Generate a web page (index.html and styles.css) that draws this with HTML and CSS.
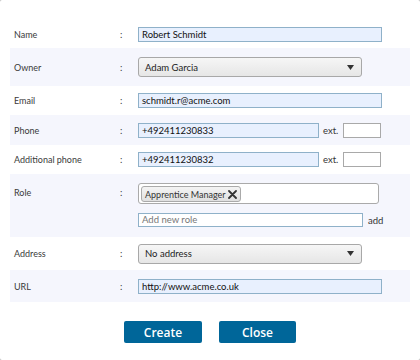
FILE: index.html
```html
<!DOCTYPE html>
<html>
<head>
<meta charset="utf-8">
<link rel="stylesheet" href="styles.css">
</head>
<body>
<div class="dialog">
  <div class="form">
    <div class="row r-name">
      <div class="label">Name</div><div class="colon">:</div>
      <div class="field"><div class="input fill w-full">Robert Schmidt</div></div>
    </div>
    <div class="row alt r-owner">
      <div class="label">Owner</div><div class="colon">:</div>
      <div class="field"><div class="select"><span>Adam Garcia</span><svg class="arrow" width="7" height="5" viewBox="0 0 7 5"><path d="M0 0H7L3.5 5Z" fill="#333"/></svg></div></div>
    </div>
    <div class="row r-email">
      <div class="label">Email</div><div class="colon">:</div>
      <div class="field"><div class="input fill w-full">schmidt.r@acme.com</div></div>
    </div>
    <div class="row alt r-phone">
      <div class="label">Phone</div><div class="colon">:</div>
      <div class="field"><div class="input fill w-phone">+492411230833</div><span class="ext">ext.</span><div class="input blank w-ext"></div></div>
    </div>
    <div class="row r-aphone">
      <div class="label">Additional phone</div><div class="colon">:</div>
      <div class="field"><div class="input fill w-phone">+492411230832</div><span class="ext">ext.</span><div class="input blank w-ext"></div></div>
    </div>
    <div class="row alt r-role top">
      <div class="label">Role</div><div class="colon">:</div>
      <div class="field col">
        <div class="tags"><span class="tag">Apprentice Manager<svg class="x" width="9" height="9" viewBox="0 0 9 9"><path d="M1 1L8 8M8 1L1 8" stroke="#333" stroke-width="1.8" stroke-linecap="round"/></svg></span></div>
        <div class="addline"><div class="input blank w-add placeholder">Add new role</div><span class="add">add</span></div>
      </div>
    </div>
    <div class="row r-address">
      <div class="label">Address</div><div class="colon">:</div>
      <div class="field"><div class="select"><span>No address</span><svg class="arrow" width="7" height="5" viewBox="0 0 7 5"><path d="M0 0H7L3.5 5Z" fill="#333"/></svg></div></div>
    </div>
    <div class="row alt r-url">
      <div class="label">URL</div><div class="colon">:</div>
      <div class="field"><div class="input fill w-full">http://www.acme.co.uk</div></div>
    </div>
  </div>
  <div class="buttons">
    <button class="btn b-create">Create</button>
    <button class="btn b-close">Close</button>
  </div>
</div>
</body>
</html>
```
FILE: styles.css
```css
html { background: #b8b8b8; }
body { margin: 0; }
.dialog {
  width: 420px; height: 360px; box-sizing: border-box;
  background: #fff; border-radius: 2px;
  padding-top: 20px;
  font-family: Lato, "Open Sans", sans-serif; font-size: 9.5px; color: #3a3a3a;
}
.form { margin: 0 10px; }
.row { display: flex; align-items: center; }
.row.alt { background: #f5f6fd; }
.row.top { align-items: flex-start; }
.r-name { height: 28px; }
.r-owner { height: 38px; }
.r-email { height: 29px; }
.r-phone { height: 30px; }
.r-aphone { height: 29px; }
.r-role { height: 63px; padding-top: 9px; box-sizing: border-box; }
.r-address { height: 33px; }
.r-url { height: 32px; }
.label { width: 106px; padding-left: 4px; font-size: 9px; }
.colon { width: 18px; }
.r-role .label, .r-role .colon { padding-top: 4px; }
.field { display: flex; align-items: center; }
.field.col { flex-direction: column; align-items: flex-start; }
.input {
  box-sizing: border-box; height: 15px; line-height: 13px;
  border: 1px solid #8fb1c9; padding: 0 3px; color: #111; font-size: 9.5px;
}
.input.fill { background: #e8f0fe; }
.input.blank { background: #fff; }
.w-full { width: 244px; }
.w-phone { width: 181px; }
.w-ext { width: 38px; border-color: #a9a9a9; }
.w-add { width: 225px; height: 14px; line-height: 12px; }
.placeholder { color: #777; }
.ext { width: 20px; padding-left: 4px; color: #333; }
.select {
  box-sizing: border-box; width: 224px; height: 20px;
  border: 1px solid #a8a8a8; border-radius: 3px;
  background: linear-gradient(#f6f6f6, #e6e6e6);
  display: flex; align-items: center; justify-content: space-between;
  padding: 0 7px 0 6px; color: #222;
}
.arrow { display: block; }
.tags {
  box-sizing: border-box; width: 241px; height: 21px;
  border: 1px solid #aaa; border-radius: 3px; background: #fff;
  padding: 2px 2px; display: flex; align-items: flex-start;
}
.tag {
  box-sizing: border-box; height: 16px;
  border: 1px solid #aaa; border-radius: 3px;
  background: linear-gradient(#f4f4f4, #e0e0e0);
  display: flex; align-items: center; padding: 0 3px 0 3px; color: #333; white-space: nowrap;
  font-size: 9px;
}
.x { display: block; flex-shrink: 0; margin-left: 2px; }
.addline { display: flex; align-items: center; margin-top: 9px; }
.add { padding-left: 5px; color: #333; }
.buttons { display: flex; justify-content: center; gap: 17px; margin-top: 19px; }
.btn {
  height: 22px; border: none; border-radius: 2px; background: #006699;
  color: #fff; font-family: "Open Sans", Lato, sans-serif; font-size: 12px; font-weight: 600;
  padding: 0;
}
.b-create { width: 78px; }
.b-close { width: 77px; }
```
